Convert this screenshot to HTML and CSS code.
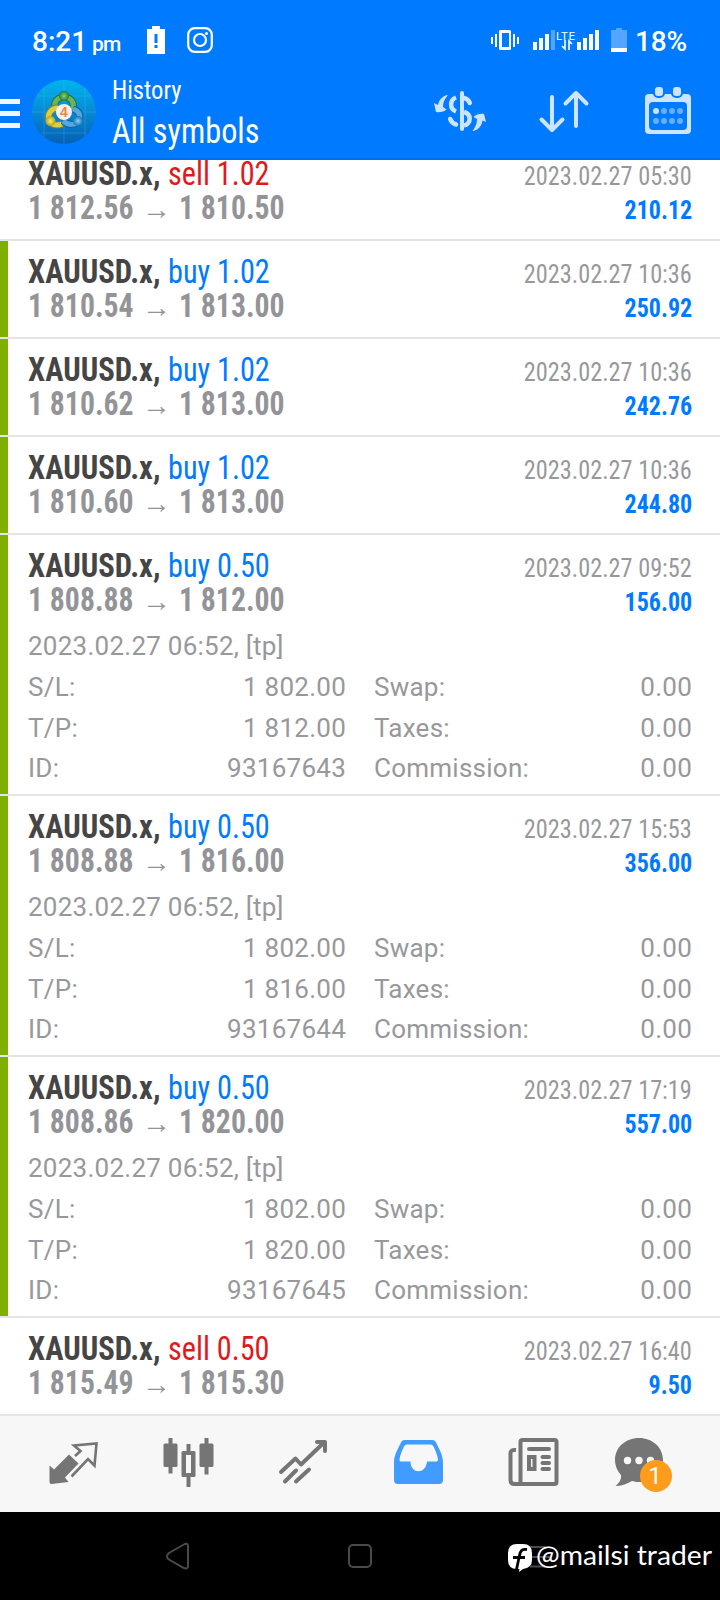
FILE: index.html
```html
<!DOCTYPE html>
<html lang="en">
<head>
<meta charset="utf-8">
<title>History</title>
<link rel="stylesheet" href="styles.css">
</head>
<body>
<div class="screen">
  <header class="header">
    <div class="status">
      <span class="clock">8:21 <small>pm</small></span>
      <svg class="st-batt" width="18" height="28" viewBox="0 0 18 28"><path fill="#fff" d="M5 0h8v3h5v25H0V3h5z"/><path fill="#007aff" d="M7.500 8h3v9h-3zM7.500 19h3v3h-3z"/></svg>
      <svg class="st-insta" width="26" height="26" viewBox="0 0 26 26" fill="none" stroke="#fff" stroke-width="2.200"><rect x="1.200" y="1.200" width="23.600" height="23.600" rx="6.500"/><circle cx="13" cy="13" r="6"/><circle cx="19.500" cy="6.500" r="1.500" fill="#fff" stroke="none"/></svg>
      <svg class="st-right" width="137" height="26" viewBox="0 0 137 26"><g fill="#fff"><path d="M0 9h2v7H0zM4 6h2v13H4zM22 6h2v13h-2zM26 9h2v7h-2z"/><path fill-rule="evenodd" d="M9.500 2h9a1.500 1.500 0 0 1 1.500 1.500v17a1.500 1.500 0 0 1-1.500 1.500h-9A1.500 1.500 0 0 1 8 20.500v-17A1.500 1.500 0 0 1 9.500 2zM11 5v14h7V5z"/><path d="M42 14h4v8h-4zM48 10h4v12h-4zM54 6h4v16h-4zM86 14h4v8h-4zM92 10h4v12h-4zM98 6h4v16h-4zM104 2h4v20h-4z"/><path d="M120 20h16v4h-16z"/></g><g fill="#fff" opacity=".33"><path d="M60 2h4v20h-4zM125 0h6v2h5v18h-16V2h5z"/></g><text x="65" y="12" class="lte" textLength="19">LTE</text><path d="M74 12v9l-3-3M78 22v-9l3 3" fill="none" stroke="#fff" stroke-width="1.600"/></svg>
      <span class="percent">18%</span>
    </div>
    <div class="appbar">
      <svg class="menu" width="20" height="29" viewBox="0 0 20 29"><path fill="#fff" opacity=".93" d="M0 0h20v5H0zM0 12h20v5H0zM0 24h20v5H0z"/></svg>
      <svg class="logo" width="64" height="64" viewBox="0 0 64 64">
        <defs>
          <linearGradient id="bg" x1="0" y1="0" x2="0" y2="1"><stop offset="0" stop-color="#00b4ee"/><stop offset=".5" stop-color="#0789d6"/><stop offset="1" stop-color="#0560b4"/></linearGradient>
          <radialGradient id="gr"><stop offset="0" stop-color="#8fd07b"/><stop offset="1" stop-color="#1f7f34"/></radialGradient>
          <radialGradient id="ye"><stop offset="0" stop-color="#f3ee78"/><stop offset="1" stop-color="#b2a31b"/></radialGradient>
          <radialGradient id="bl"><stop offset="0" stop-color="#8ad0f5"/><stop offset="1" stop-color="#1673b5"/></radialGradient>
        </defs>
        <circle cx="32" cy="32" r="32" fill="url(#bg)"/>
        <path d="M12 7v50M32 0v64M53 8v48M5 16h54M0 32h64M9 53h46" stroke="#5cc2f0" stroke-width=".8" opacity=".35"/>
        <path d="M24 30c-3-6-1-12 8-13 9 1 11 7 8 13" fill="none" stroke="#1f7335" stroke-width="7"/>
        <path d="M24 30c-3-6-1-12 8-13 9 1 11 7 8 13" fill="none" stroke="#69b55c" stroke-width="5"/>
        <path d="M26 28c-7 0-11 6-9 12 2 5 8 6 13 4" fill="none" stroke="#8d8118" stroke-width="7"/>
        <path d="M26 28c-7 0-11 6-9 12 2 5 8 6 13 4" fill="none" stroke="#d9cf45" stroke-width="5"/>
        <path d="M41 29c6 2 8 6 6 12-3 4-10 5-16 0" fill="none" stroke="#125d9c" stroke-width="7"/>
        <path d="M41 29c6 2 8 6 6 12-3 4-10 5-16 0" fill="none" stroke="#52a9df" stroke-width="5"/>
        <circle cx="32" cy="16" r="5" fill="url(#gr)"/><circle cx="18.500" cy="41" r="5" fill="url(#ye)"/><circle cx="46" cy="41" r="5" fill="url(#bl)"/>
        <circle cx="32" cy="32" r="8" fill="#f4f1f0"/>
        <text x="32" y="37" class="logo-num" text-anchor="middle">4</text>
      </svg>
      <div class="titles"><div class="t1 cond">History</div><div class="t2 cond">All symbols</div></div>
      <svg class="actions" width="260" height="52" viewBox="432 84 260 52">
        <g stroke="#cce4ff" fill="none" stroke-width="4" stroke-linecap="round" stroke-linejoin="round">
          <path d="M462 93v36"/>
          <path d="M456 97.500c-6.500 2.500-6.500 11.500 0 14" stroke-linecap="butt" stroke-width="4.500"/>
          <path d="M456 124.500c-3-1-5-3-5.800-5.500M464 98c3 .8 5 2.500 5.800 5" stroke-width="4.500"/>
          <path d="M464 112c7.500 2 7.500 11.500 0 13.500" stroke-linecap="butt" stroke-width="4.500"/>
          <path d="M552 97v33M541.500 119.500L552 130l10.500-10.500M576 126V93M565.500 103.500L576 93l10.500 10.500"/>
        </g>
        <g fill="#cce4ff">
          <path d="M448 95c-5 .5-9 4.500-10 10l-4-2 2 9c4 .6 8 0 10.500-2.500l-3.500-2.500c0-4.500 1.500-8 5-12z"/>
          <path d="M472.500 131c5-.5 9.500-5 10-10.500l3.500 1.500-2-8c-3.500-.8-7.500 0-10.500 3l3.500 2c0 4.500-1.500 8-4.500 12z"/>
          <path fill-rule="evenodd" d="M649 94h38a4 4 0 0 1 4 4v32a4 4 0 0 1-4 4h-38a4 4 0 0 1-4-4V98a4 4 0 0 1 4-4zM653 102a4 4 0 0 0-4 4v20a4 4 0 0 0 4 4h30a4 4 0 0 0 4-4v-20a4 4 0 0 0-4-4z"/>
          <rect x="654" y="86" width="10" height="11" rx="4" stroke="#007aff" stroke-width="2"/>
          <rect x="672" y="86" width="10" height="11" rx="4" stroke="#007aff" stroke-width="2"/>
          <circle cx="656" cy="111" r="3"/>
          <g opacity=".5"><circle cx="664" cy="111" r="3"/><circle cx="672" cy="111" r="3"/><circle cx="680" cy="111" r="3"/><circle cx="656" cy="121" r="3"/><circle cx="664" cy="121" r="3"/><circle cx="672" cy="121" r="3"/><circle cx="680" cy="121" r="3"/></g>
        </g>
      </svg>
    </div>
  </header>

  <main class="list">
    <article class="deal plain first">
      <div class="line l1 cond"><b class="sym">XAUUSD.x,</b><span class="side sell">sell 1.02</span><time>2023.02.27 05:30</time></div>
      <div class="line l2 cond"><span class="price">1 812.56</span><span class="arrow">→</span><span class="price">1 810.50</span><b class="profit">210.12</b></div>
    </article>
    <article class="deal">
      <div class="line l1 cond"><b class="sym">XAUUSD.x,</b><span class="side buy">buy 1.02</span><time>2023.02.27 10:36</time></div>
      <div class="line l2 cond"><span class="price">1 810.54</span><span class="arrow">→</span><span class="price">1 813.00</span><b class="profit">250.92</b></div>
    </article>
    <article class="deal">
      <div class="line l1 cond"><b class="sym">XAUUSD.x,</b><span class="side buy">buy 1.02</span><time>2023.02.27 10:36</time></div>
      <div class="line l2 cond"><span class="price">1 810.62</span><span class="arrow">→</span><span class="price">1 813.00</span><b class="profit">242.76</b></div>
    </article>
    <article class="deal">
      <div class="line l1 cond"><b class="sym">XAUUSD.x,</b><span class="side buy">buy 1.02</span><time>2023.02.27 10:36</time></div>
      <div class="line l2 cond"><span class="price">1 810.60</span><span class="arrow">→</span><span class="price">1 813.00</span><b class="profit">244.80</b></div>
    </article>
    <article class="deal open">
      <div class="line l1 cond"><b class="sym">XAUUSD.x,</b><span class="side buy">buy 0.50</span><time>2023.02.27 09:52</time></div>
      <div class="line l2 cond"><span class="price">1 808.88</span><span class="arrow">→</span><span class="price">1 812.00</span><b class="profit">156.00</b></div>
      <div class="note">2023.02.27 06:52, [tp]</div>
      <div class="grid"><span>S/L:</span><span>1 802.00</span><span>Swap:</span><span>0.00</span><span>T/P:</span><span>1 812.00</span><span>Taxes:</span><span>0.00</span><span>ID:</span><span>93167643</span><span>Commission:</span><span>0.00</span></div>
    </article>
    <article class="deal open">
      <div class="line l1 cond"><b class="sym">XAUUSD.x,</b><span class="side buy">buy 0.50</span><time>2023.02.27 15:53</time></div>
      <div class="line l2 cond"><span class="price">1 808.88</span><span class="arrow">→</span><span class="price">1 816.00</span><b class="profit">356.00</b></div>
      <div class="note">2023.02.27 06:52, [tp]</div>
      <div class="grid"><span>S/L:</span><span>1 802.00</span><span>Swap:</span><span>0.00</span><span>T/P:</span><span>1 816.00</span><span>Taxes:</span><span>0.00</span><span>ID:</span><span>93167644</span><span>Commission:</span><span>0.00</span></div>
    </article>
    <article class="deal open">
      <div class="line l1 cond"><b class="sym">XAUUSD.x,</b><span class="side buy">buy 0.50</span><time>2023.02.27 17:19</time></div>
      <div class="line l2 cond"><span class="price">1 808.86</span><span class="arrow">→</span><span class="price">1 820.00</span><b class="profit">557.00</b></div>
      <div class="note">2023.02.27 06:52, [tp]</div>
      <div class="grid"><span>S/L:</span><span>1 802.00</span><span>Swap:</span><span>0.00</span><span>T/P:</span><span>1 820.00</span><span>Taxes:</span><span>0.00</span><span>ID:</span><span>93167645</span><span>Commission:</span><span>0.00</span></div>
    </article>
    <article class="deal plain">
      <div class="line l1 cond"><b class="sym">XAUUSD.x,</b><span class="side sell">sell 0.50</span><time>2023.02.27 16:40</time></div>
      <div class="line l2 cond"><span class="price">1 815.49</span><span class="arrow">→</span><span class="price">1 815.30</span><b class="profit">9.50</b></div>
    </article>
  </main>

  <nav class="tabs">
    <svg width="720" height="96" viewBox="0 1416 720 96">
      <g fill="#757575">
        <path d="M49.500 1465.500l4.500 4 15-15 9.500 9-13.500 14 3.500 4.500-17 2q-2 0-2-2z"/>
        <path d="M163.500 1445a1.500 1.500 0 0 1 1.500-1.500h3.500V1438h4v5.500h3.500a1.500 1.500 0 0 1 1.500 1.500v20.500a1.500 1.500 0 0 1-1.500 1.500h-3.500v6.500h-4V1467H165a1.500 1.500 0 0 1-1.500-1.500zM199.500 1445a1.500 1.500 0 0 1 1.500-1.500h3.500V1438h4v5.500h3.500a1.500 1.500 0 0 1 1.500 1.500v20.500a1.500 1.500 0 0 1-1.500 1.500h-3.500v7.500h-4V1467H201a1.500 1.500 0 0 1-1.500-1.500z"/>
        <path fill-rule="evenodd" d="M181.500 1452.500a1.500 1.500 0 0 1 1.500-1.500h3.500v-7h4v7h3.500a1.500 1.500 0 0 1 1.500 1.500v23a1.500 1.500 0 0 1-1.500 1.500h-3.500v10h-4v-10H183a1.500 1.500 0 0 1-1.500-1.500zM186 1455v18h5v-18z"/>
        <path d="M639 1438c13.500 0 24 9.500 24 22s-10.500 22-24 22c-3 0-5-.5-7-1-5 3-11 5-16.500 5 4-3.500 6-6.500 5.500-11-3.500-4-6-9-6-15 0-12.500 10.500-22 24-22z"/>
      </g>
      <path d="M75 1456l5.500-5-6.500-5.500 22.500-2-2 22-6.500-6.500-16.500 17.500" fill="none" stroke="#757575" stroke-width="2.600"/>
      <g fill="none" stroke="#757575" stroke-width="4" stroke-linecap="round" stroke-linejoin="round"><path d="M281 1472l14.500-13.500 5.500 6 23-22M317 1442h8v9M285 1481.500l11-11M296 1481.500l13-12"/></g>
      <path fill="#429bff" fill-rule="evenodd" d="M405 1440h27c3 0 4 2 5 4.500 3 6 6 11.500 6 18v17.500a4 4 0 0 1-4 4h-41a4 4 0 0 1-4-4v-17.500c0-6.500 3-12 6-18 1-2.500 2-4.500 5-4.500zM407 1444.500q-2 0-3 2c-2 4-4 9-4.500 13q-.3 2 1.500 2h9.500c0 13 15.500 13 16.500 0h9.500q1.800 0 1.500-2c-.5-4-2.500-9-4.500-13q-1-2-3-2z"/>
      <g fill="none" stroke="#757575" stroke-width="4"><rect x="520.500" y="1440" width="36" height="44" rx="2"/><path d="M516 1450c-4-.5-5.500 1-5.500 3v27q0 4 4 4h8"/><rect x="529" y="1457" width="5.500" height="12"/><path stroke-linecap="round" d="M529 1449h20M542.500 1457h6.500M542.500 1463h6.500M542.500 1469h6.500"/></g>
      <g fill="#f7f7f7"><circle cx="627.500" cy="1460.500" r="3.700"/><circle cx="639" cy="1460.500" r="3.700"/><circle cx="650.500" cy="1460.500" r="3.700"/></g>
      <circle cx="656" cy="1476" r="16" fill="#ff9c1b"/>
      <text x="655" y="1484" text-anchor="middle" class="badge">1</text>
    </svg>
  </nav>
  <footer class="sysnav">
    <svg width="720" height="88" viewBox="0 1512 720 88"><g fill="none" stroke="#4a4a4a" stroke-width="2">
      <path d="M183 1545q5-3 5 1v20q0 4-5 1.500l-14-8q-4-3 0-6.500z"/><rect x="349" y="1545" width="22" height="22" rx="4"/><path d="M530 1547h15M530 1557h21M530 1566.500h15"/></g>
      <path fill="#fff" d="M517 1544h6q9 0 9 9v7q0 8-9 9l-4 3 .5-3H517q-9 0-9-9v-7q0-9 9-9z"/>
      <path fill="none" stroke="#000" stroke-width="2.800" d="M527 1549.500c-5-.8-6.500 1-7.500 6l-3 14M513 1557.500h12"/>
      <text x="536" y="1565" class="mark" textLength="176" lengthAdjust="spacingAndGlyphs">@mailsi trader</text>
    </svg>
  </footer>
</div>
</body>
</html>
```

FILE: styles.css
```css
body { margin: 0; background: #fff; font-family: Roboto, sans-serif; }
svg { display: block; flex: none; }
.screen { width: 720px; height: 1600px; overflow: hidden; display: flex; flex-direction: column; }
.cond { font-family: "Roboto Condensed", Roboto, sans-serif; font-stretch: 75%; }

.header { height: 160px; box-sizing: border-box; background: #007aff; border-bottom: 2px solid #006fe6; color: #fff; }
.status { display: flex; height: 80px; align-items: flex-start; padding-left: 32px; font-weight: 500; font-size: 28px; }
.clock { width: 115px; line-height: 33px; padding-top: 25px; white-space: nowrap; }
.clock small { font-size: 21px; margin-left: -2px; letter-spacing: -.8px; }
.st-batt { margin-top: 26px; }
.st-insta { margin: 27px 0 0 22px; }
.st-right { margin: 28px 0 0 278px; }
.percent { line-height: 33px; padding: 25px 0 0 7px; letter-spacing: -.2px; }
.lte { font: 11.500px Roboto, sans-serif; fill: #fff; }
.appbar { display: flex; height: 78px; align-items: flex-start; }
.menu { margin-top: 19px; }
.logo { margin-left: 12px; }
.logo-num { font: bold 14px "Liberation Sans", sans-serif; fill: #f58634; }
.titles { width: 320px; padding-left: 16px; white-space: nowrap; }
.t1 { font-size: 26px; line-height: 30px; margin-top: -5px; transform: scaleX(.945); transform-origin: 0 0; }
.t2 { font-size: 34.500px; line-height: 40px; margin-top: 6px; transform: scaleX(.935); transform-origin: 0 0; }
.actions { margin-top: 4px; }

.list { flex: 1; }
.deal { box-sizing: border-box; height: 98px; padding: 14px 28px 0; border-bottom: 2px solid #e5e5e5; display: flow-root; background: linear-gradient(#7fb000, #7fb000) 0 0 / 8px 100% no-repeat; background-clip: padding-box; }
.plain { background: none; }
.first { height: 81px; padding-top: 0; }
.first .l1 { margin-top: -3px; }
.open { height: 261px; }
.line { display: flex; align-items: baseline; white-space: nowrap; font-size: 32.500px; height: 34px; line-height: 34px; }
.l2 { color: #939498; }
.sym { color: #454545; width: 140px; transform: scaleX(.943); transform-origin: 0 0; }
.side { transform: scaleX(.93); transform-origin: 0 0; }
.buy { color: #007aff; }
.sell { color: #e0191c; }
time { margin-left: auto; font-size: 26px; line-height: 30px; color: #97989b; transform: scaleX(.934); transform-origin: 100% 0; }
.price { font-weight: 700; width: 112px; transform: scaleX(.914); transform-origin: 0 0; }
.profit { margin-left: auto; font-size: 26px; line-height: 30px; color: #007aff; transform: scaleX(.924); transform-origin: 100% 0; }
.arrow { width: 37px; padding-left: 2px; flex: none; font: 29px/30px "Liberation Sans", sans-serif; }
.note, .grid { font-size: 26px; color: #97989b; letter-spacing: .25px; }
.note { margin-top: 14px; line-height: 30px; }
.grid { display: grid; grid-template-columns: 120px 198px 155px 191px; margin-top: 6px; line-height: 40.500px; }
.grid span:nth-child(even) { text-align: right; }
.grid span:nth-child(4n+3) { padding-left: 28px; }

.tabs { height: 96px; background: #f7f7f7; }
.badge { font: 24px Roboto, sans-serif; fill: #fff; }
.sysnav { height: 88px; background: #000; }
.mark { font: 27px Lato, sans-serif; fill: #fff; }
```
